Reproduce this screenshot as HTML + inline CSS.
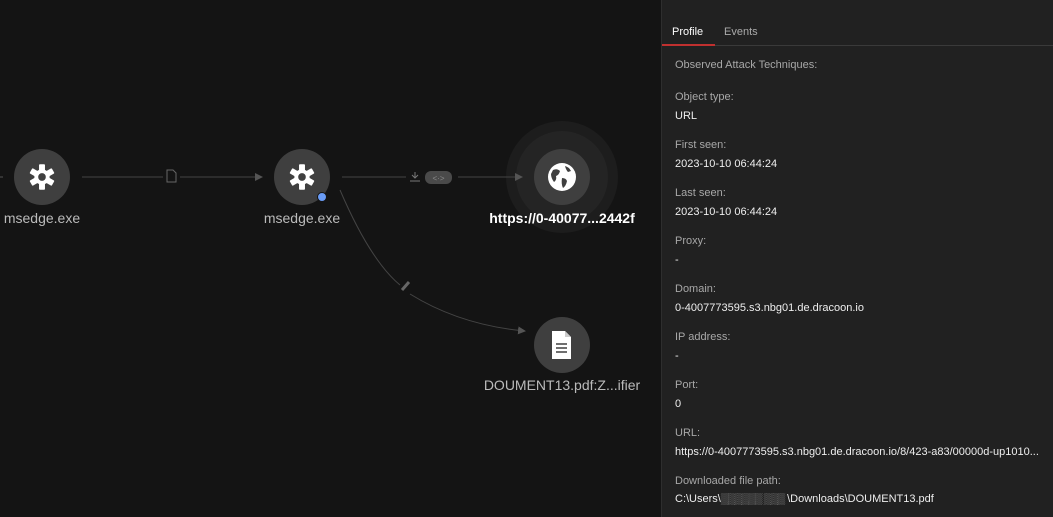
<!DOCTYPE html>
<html><head><style>
body{margin:0;width:1053px;height:517px;background:#141414;overflow:hidden;font-family:"Liberation Sans",sans-serif;position:relative}
.panel{position:absolute;left:661px;top:0;width:392px;height:517px;background:#212121;border-left:1px solid #2e2e2e;color:#ddd;font-size:11px}
.tabs{position:absolute;top:20px;left:0;right:0;height:25px;border-bottom:1px solid #3a3a3a}
.tab{position:absolute;top:6px;font-size:11px}
.k{position:absolute;left:13px;color:#a8a8a8}
.v{position:absolute;left:13px;color:#eee;white-space:nowrap}
.lbl{position:absolute;font-size:14px;color:#bbb;transform:translateX(-50%);white-space:nowrap}
</style></head><body>
<svg width="661" height="517" style="position:absolute;left:0;top:0">
<defs><marker id="a" markerWidth="8" markerHeight="8" refX="7" refY="4" orient="auto"><path d="M0,0L8,4L0,8z" fill="#555"/></marker></defs>
<circle cx="562" cy="177" r="56" fill="#1d1d1d"/>
<circle cx="562" cy="177" r="46" fill="#242424"/>
<path d="M0,177 L3,177" stroke="#555"/>
<line x1="82" y1="177" x2="163" y2="177" stroke="#444"/>
<line x1="180" y1="177" x2="262" y2="177" stroke="#444" marker-end="url(#a)"/>
<path d="M167,170h6l3,3v9h-9z" fill="none" stroke="#666"/>
<line x1="342" y1="177" x2="406" y2="177" stroke="#444"/>
<path d="M415,172v6M412,175l3,3 3-3M410,181h10" stroke="#777" fill="none"/>
<rect x="425" y="171" width="27" height="13" rx="6" fill="#4a4a4a"/>
<text x="438.5" y="181" fill="#888" font-size="8" text-anchor="middle">&lt;·&gt;</text>
<line x1="458" y1="177" x2="522" y2="177" stroke="#444" marker-end="url(#a)"/>
<path d="M340,190 Q370,260 400,285" stroke="#444" fill="none"/>
<path d="M410,294 Q460,325 525,331" stroke="#444" fill="none" marker-end="url(#a)"/>
<line x1="402" y1="290" x2="409" y2="282" stroke="#666" stroke-width="3"/>
<circle cx="42" cy="177" r="28" fill="#3f3f3f"/>
<circle cx="302" cy="177" r="28" fill="#3f3f3f"/>
<circle cx="562" cy="177" r="28" fill="#3f3f3f"/>
<circle cx="562" cy="345" r="28" fill="#3f3f3f"/>
<circle cx="322" cy="197" r="4.5" fill="#6a9cf5" stroke="#141414" stroke-width="1"/>
<g fill="#fff">
<g transform="translate(42,177) scale(0.85)"><circle r="9"/><rect x="-3.5" y="-15" width="7" height="30" rx="1"/><rect x="-3.5" y="-15" width="7" height="30" rx="1" transform="rotate(60)"/><rect x="-3.5" y="-15" width="7" height="30" rx="1" transform="rotate(120)"/><circle r="4.5" fill="#3f3f3f"/></g>
<g transform="translate(302,177) scale(0.85)"><circle r="9"/><rect x="-3.5" y="-15" width="7" height="30" rx="1"/><rect x="-3.5" y="-15" width="7" height="30" rx="1" transform="rotate(60)"/><rect x="-3.5" y="-15" width="7" height="30" rx="1" transform="rotate(120)"/><circle r="4.5" fill="#3f3f3f"/></g>
<circle cx="562" cy="177" r="14"/>
<path d="M553,170q4,-2 7,1q-1,4 -4,5q1,4 -2,6q-3,-4 -3,-8z M562,178q4,0 5,3q-1,5 -4,7q-2,-4 -1,-10z M565,166q4,1 6,5l-3,1q-2,-2 -3,-6z" fill="#3f3f3f"/>
<path d="M552,331h13l6,6v22h-19z"/>
<path d="M565,331v6h6z" fill="#ccc"/>
<g stroke="#3f3f3f" stroke-width="1.5"><line x1="556" y1="344" x2="567" y2="344"/><line x1="556" y1="348" x2="567" y2="348"/><line x1="556" y1="352" x2="567" y2="352"/></g>
</g>
</svg>
<div class="lbl" style="left:42px;top:210px">msedge.exe</div>
<div class="lbl" style="left:302px;top:210px">msedge.exe</div>
<div class="lbl" style="left:562px;top:210px;color:#fff;font-weight:bold">https://0-40077...2442f</div>
<div class="lbl" style="left:562px;top:377px">DOUMENT13.pdf:Z...ifier</div>
<div class="panel">
<div class="tabs"><span class="tab" style="left:10px;color:#fff">Profile</span><span class="tab" style="left:62px;color:#aaa">Events</span>
<div style="position:absolute;left:0;top:24px;width:53px;height:2px;background:#c0302f"></div></div>
<div class="k" style="top:59px">Observed Attack Techniques:</div>
<div class="k" style="top:91px">Object type:</div><div class="v" style="top:110px">URL</div>
<div class="k" style="top:139px">First seen:</div><div class="v" style="top:158px">2023-10-10 06:44:24</div>
<div class="k" style="top:187px">Last seen:</div><div class="v" style="top:206px">2023-10-10 06:44:24</div>
<div class="k" style="top:235px">Proxy:</div><div class="v" style="top:254px">-</div>
<div class="k" style="top:283px">Domain:</div><div class="v" style="top:302px">0-4007773595.s3.nbg01.de.dracoon.io</div>
<div class="k" style="top:331px">IP address:</div><div class="v" style="top:350px">-</div>
<div class="k" style="top:379px">Port:</div><div class="v" style="top:398px">0</div>
<div class="k" style="top:427px">URL:</div><div class="v" style="top:446px">https://0-4007773595.s3.nbg01.de.dracoon.io/8/423-a83/00000d-up1010...</div>
<div class="k" style="top:475px">Downloaded file path:</div><div class="v" style="top:493px">C:\Users\<span style="color:#888;letter-spacing:-1px">▒▒▒▒▒▒ ▒▒▒</span> \Downloads\DOUMENT13.pdf</div>
</div>
</body></html>
